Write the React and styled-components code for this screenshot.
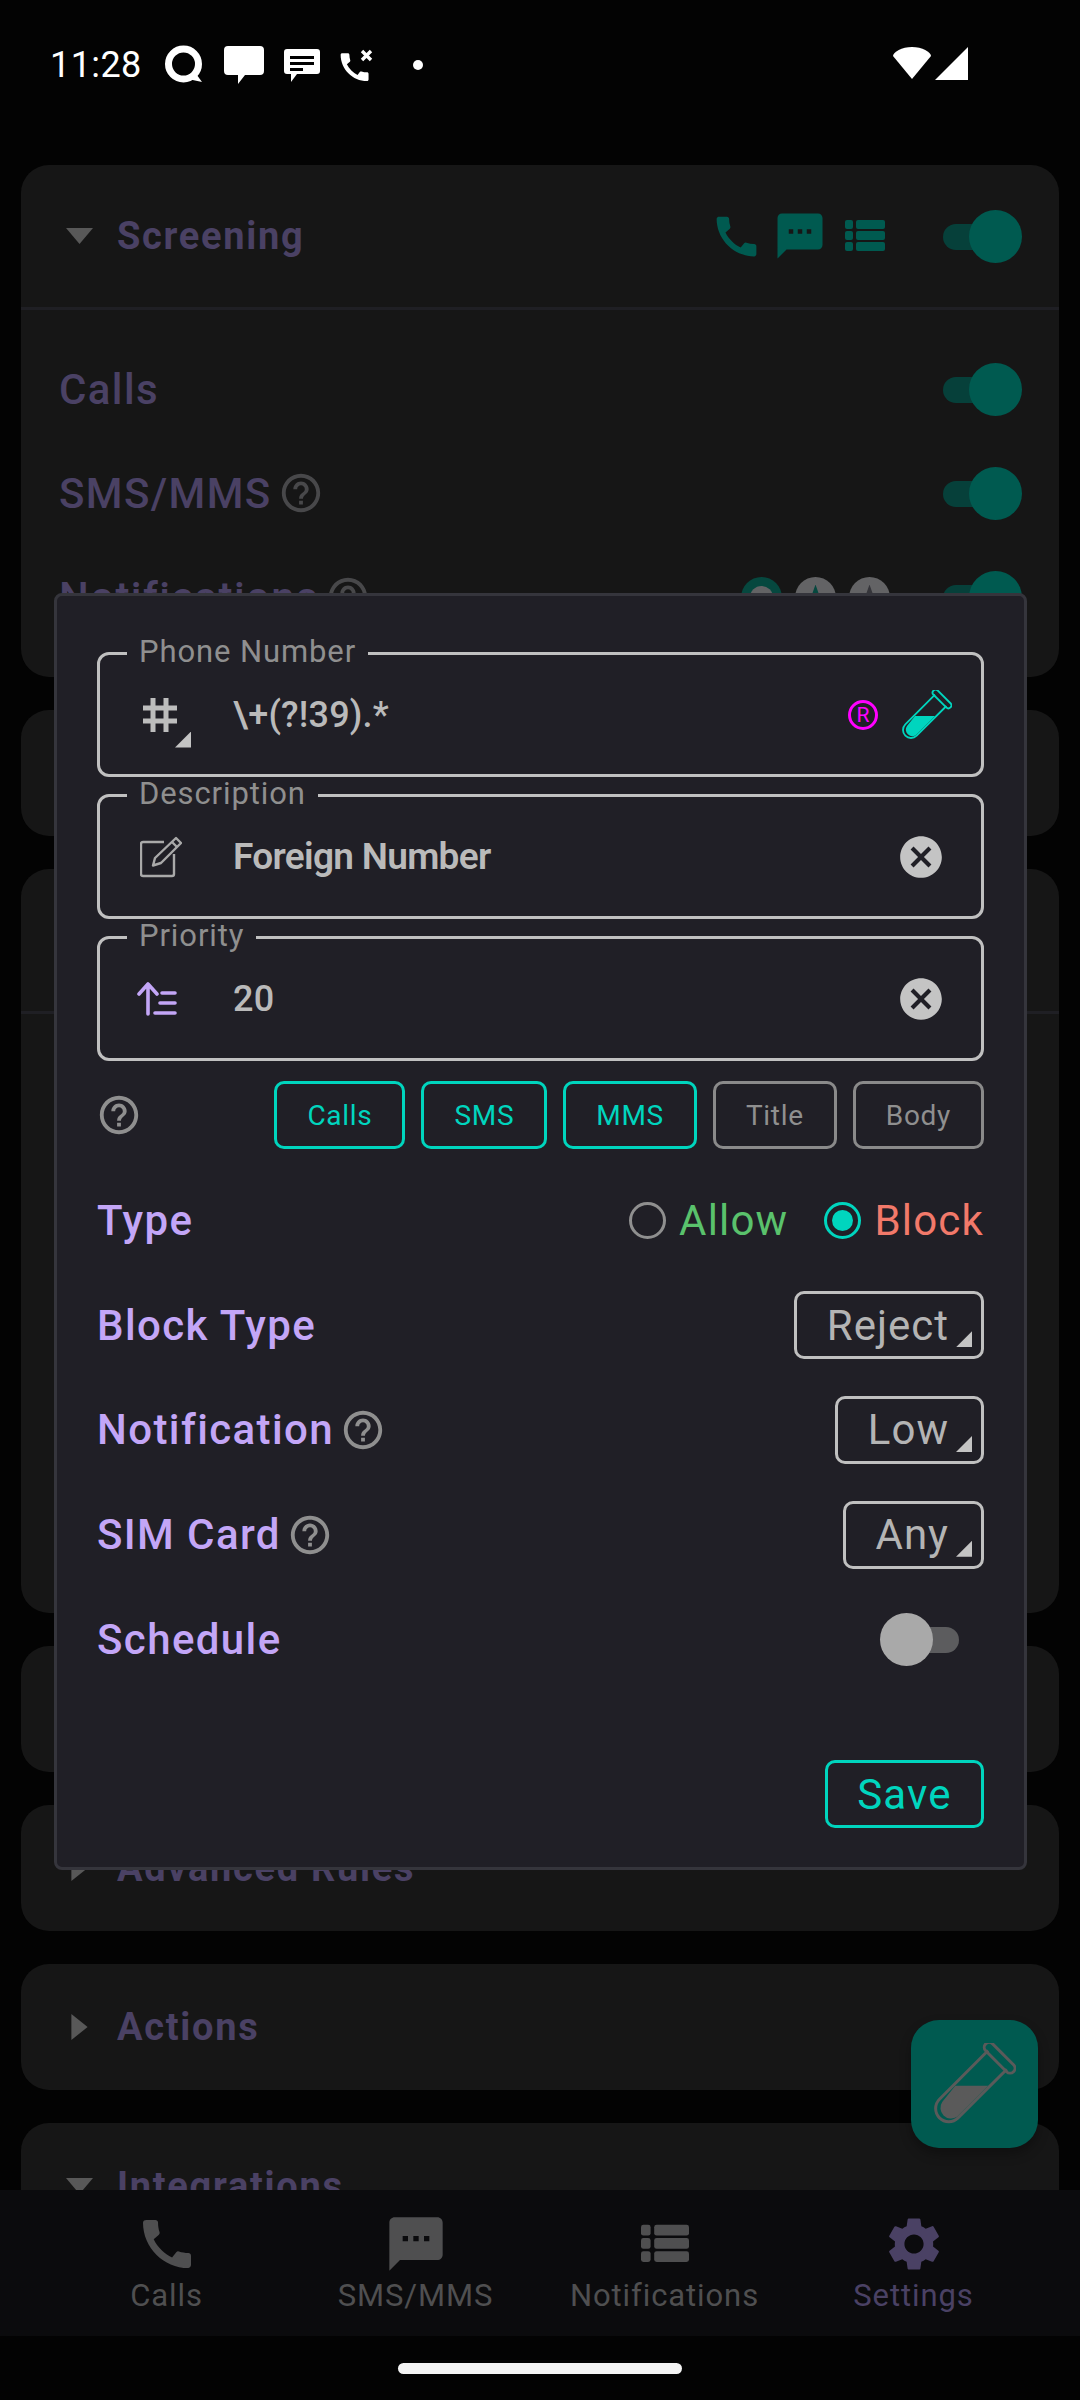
import React from 'react';
import styled, { createGlobalStyle } from 'styled-components';
import { MdCall, MdSms, MdSettings, MdCancel, MdHelpOutline } from 'react-icons/md';

const GlobalStyle = createGlobalStyle`
    html, body {
        margin: 0;
        padding: 0;
        background: #030303;
    }
    * {
        box-sizing: border-box;
    }
`

const TEAL = '#00d5be';
const DIM_TEAL = '#005a50';
const LILAC = '#c3a6f7';
const DIM_LILAC = '#4a4164';

const TubeIcon = ({ size, color }) => (
    <svg width={size} height={size} viewBox="0 0 50 50" fill="none">
        <path d="M33 4.6L3.34 34.34A8 8 0 0 0 14.66 45.66L44.4 16" stroke={color} strokeWidth="1.8" />
        <rect x="28" y="6" width="24" height="6" rx="3" transform="rotate(45 40 9)" stroke={color} strokeWidth="1.8" />
        <path d="M13 26H33L14 45A6.5 6.5 0 0 1 5 36Z" fill={color} />
    </svg>
)

const ListIcon = ({ size, color }) => (
    <svg width={size} height={size} viewBox="0 0 40 32" fill={color}>
        <rect x="0" y="0" width="8" height="9" rx="2" />
        <rect x="0" y="11" width="8" height="9" rx="2" />
        <rect x="0" y="22" width="8" height="9" rx="2" />
        <rect x="11" y="0" width="29" height="9" rx="2" />
        <rect x="11" y="11" width="29" height="9" rx="2" />
        <rect x="11" y="22" width="29" height="9" rx="2" />
    </svg>
)

const HashIcon = () => (
    <svg width="36" height="36" viewBox="0 0 36 36" stroke="#bdbdbd" strokeWidth="5" fill="none">
        <path d="M11 1V35M24 1V35M1 11H35M1 24H35" />
    </svg>
)

const EditIcon = () => (
    <svg width="42" height="42" viewBox="0 0 42 42" fill="none" stroke="#a9a9a9" strokeWidth="2.4" strokeLinejoin="round">
        <path d="M24 6H3a2 2 0 0 0-2 2V38a2 2 0 0 0 2 2H32a2 2 0 0 0 2-2V18" />
        <path d="M36 2L41 7L21 27L13 29.5L15 22Z" fill="#201f26" />
        <path d="M32 6L37 11" />
    </svg>
)

const PriorityIcon = () => (
    <svg width="40" height="34" viewBox="0 0 40 34" fill="none" stroke={LILAC} strokeWidth="3.6" strokeLinecap="round" strokeLinejoin="round">
        <path d="M11 32V2M2 12L11 2L20 12" />
        <path d="M25 11H38M23 21H38M18 31H38" />
    </svg>
)

const QIcon = () => (
    <svg width="40" height="40" viewBox="0 0 40 40" fill="none">
        <circle cx="19.5" cy="19" r="15" stroke="#fff" strokeWidth="7" />
        <path d="M30 26L38 37L24 34Z" fill="#fff" />
    </svg>
)

const BubbleIcon = () => (
    <svg width="40" height="38" viewBox="0 0 40 38" fill="#fff">
        <path d="M4 0H36a4 4 0 0 1 4 4V25a4 4 0 0 1-4 4H21L14 38V29H4a4 4 0 0 1-4-4V4a4 4 0 0 1 4-4Z" />
    </svg>
)

const MessageIcon = () => (
    <svg width="36" height="33" viewBox="0 0 36 33">
        <path d="M3 0H33a3 3 0 0 1 3 3V22a3 3 0 0 1-3 3H13L7 33V25H3a3 3 0 0 1-3-3V3a3 3 0 0 1 3-3Z" fill="#fff" />
        <path d="M6 7H30V10H6ZM6 13H30V16H6ZM6 19H19V22H6Z" fill="#000" />
    </svg>
)

const CallCrossIcon = () => (
    <svg width="33" height="33" viewBox="0 0 33 33" fill="none">
        <g transform="translate(-4 -0.5) scale(1.55)">
            <path d="M20.01 15.38c-1.23 0-2.42-.2-3.53-.56-.35-.12-.74-.03-1.01.24l-1.57 1.97c-2.83-1.35-5.48-3.9-6.89-6.83l1.95-1.66c.27-.28.35-.67.24-1.02-.37-1.11-.56-2.3-.56-3.53 0-.54-.45-.99-.99-.99H4.19C3.65 3 3 3.24 3 3.99 3 13.28 10.73 21 20.01 21c.71 0 .99-.63.99-1.18v-3.45c0-.54-.45-.99-.99-.99z" fill="#fff" />
        </g>
        <path d="M22 2L31 11M31 2L22 11" stroke="#fff" strokeWidth="3.4" />
    </svg>
)

const WifiIcon = () => (
    <svg width="40" height="32" viewBox="0 0 40 32" fill="#fff">
        <path d="M20 32L1 9C1 5 10 0 20 0S39 5 39 9Z" />
    </svg>
)

const SignalIcon = () => (
    <svg width="33" height="33" viewBox="0 0 33 33" fill="#fff">
        <path d="M33 0V33H0Z" />
    </svg>
)

const Switch = ({ on }) => (
    <SwitchBox>
        <SwitchTrack $on={on} />
        <SwitchThumb $on={on} />
    </SwitchBox>
)

const Select = ({ children }) => (
    <SelectBox>
        {children}
        <Corner $right={9} $bottom={9} />
    </SelectBox>
)

const Help = ({ dim, flush }) => (
    <HelpMark $dim={dim} $flush={flush}><MdHelpOutline size={46} /></HelpMark>
)

const Field = ({ label, icon, value, bold, children }) => (
    <FieldBox>
        <FieldLabel>{label}</FieldLabel>
        <FieldIcon>{icon}</FieldIcon>
        <FieldValue $bold={bold}>{value}</FieldValue>
        {children}
    </FieldBox>
)

const App = () => {
    return (
        <Screen>
            <GlobalStyle />
            <StatusBar>
                <Clock>11:28</Clock>
                <StatusIcons>
                    <QIcon />
                    <BubbleIcon />
                    <MessageIcon />
                    <CallCrossIcon />
                    <StatusDot />
                </StatusIcons>
                <NetworkIcons>
                    <WifiIcon />
                    <SignalIcon />
                </NetworkIcons>
            </StatusBar>

            <Scroller>
                <Card $height={512}>
                    <Header $expanded>
                        <Arrow $open />
                        <Title>Screening</Title>
                        <HeaderIcons>
                            <MdCall size={53} color={DIM_TEAL} />
                            <MdSms size={54} color={DIM_TEAL} />
                            <ListIcon size={40} color={DIM_TEAL} />
                        </HeaderIcons>
                        <Switch on />
                    </Header>
                    <CardBody>
                        <CardRow>
                            <RowLabel>Calls</RowLabel>
                            <Switch on />
                        </CardRow>
                        <CardRow>
                            <RowLabel>SMS/MMS</RowLabel>
                            <Help dim />
                            <Switch on />
                        </CardRow>
                        <CardRow>
                            <RowLabel>Notifications</RowLabel>
                            <Help dim />
                            <Dots>
                                <Dot $bg="#06483f"><DotCore /></Dot>
                                <Dot $bg="#636365"><DotPeak $bg="#06483f" /></Dot>
                                <Dot $bg="#636365"><DotPeak $bg="#35353a" /></Dot>
                            </Dots>
                            <Switch on />
                        </CardRow>
                    </CardBody>
                </Card>
                <Card $height={126} />
                <Card $height={744}>
                    <Header $expanded />
                </Card>
                <Card $height={126} />
                <Card $height={126}>
                    <Header>
                        <Arrow />
                        <Title>Advanced Rules</Title>
                    </Header>
                </Card>
                <Card $height={126}>
                    <Header>
                        <Arrow />
                        <Title>Actions</Title>
                    </Header>
                </Card>
                <Card $height={300}>
                    <Header>
                        <Arrow $open />
                        <Title>Integrations</Title>
                    </Header>
                </Card>
            </Scroller>

            <BottomNav>
                <NavItem>
                    <MdCall size={64} />
                    <NavLabel>Calls</NavLabel>
                </NavItem>
                <NavItem>
                    <MdSms size={64} />
                    <NavLabel>SMS/MMS</NavLabel>
                </NavItem>
                <NavItem>
                    <NavIconBox><ListIcon size={48} color="#4f4f50" /></NavIconBox>
                    <NavLabel>Notifications</NavLabel>
                </NavItem>
                <NavItem $active>
                    <MdSettings size={64} />
                    <NavLabel>Settings</NavLabel>
                </NavItem>
            </BottomNav>

            <GestureBar>
                <HomePill />
            </GestureBar>

            <Fab>
                <TubeIcon size={82} color="#5a5a5a" />
            </Fab>

            <Dialog>
                <Field
                    label="Phone Number"
                    icon={<HashBox><HashIcon /><Corner $right={1} $bottom={-15} /></HashBox>}
                    value="\+(?!39).*"
                >
                    <RegexMark>R</RegexMark>
                    <TubeSlot><TubeIcon size={50} color={TEAL} /></TubeSlot>
                </Field>
                <Field label="Description" icon={<EditIcon />} value="Foreign Number" bold>
                    <ClearMark><MdCancel size={50} /></ClearMark>
                </Field>
                <Field label="Priority" icon={<PriorityShift><PriorityIcon /></PriorityShift>} value="20">
                    <ClearMark><MdCancel size={50} /></ClearMark>
                </Field>

                <ChipRow>
                    <Help flush />
                    <Chips>
                        <Chip $active>Calls</Chip>
                        <Chip $active>SMS</Chip>
                        <Chip $active>MMS</Chip>
                        <Chip>Title</Chip>
                        <Chip>Body</Chip>
                    </Chips>
                </ChipRow>

                <OptionRow>
                    <OptionLabel>Type</OptionLabel>
                    <RadioGroup>
                        <Radio />
                        <RadioText $color="#5ac26c">Allow</RadioText>
                        <Radio $checked />
                        <RadioText $color="#f2796a">Block</RadioText>
                    </RadioGroup>
                </OptionRow>
                <OptionRow>
                    <OptionLabel>Block Type</OptionLabel>
                    <Select>Reject</Select>
                </OptionRow>
                <OptionRow>
                    <OptionLabel>Notification</OptionLabel>
                    <Help />
                    <Select>Low</Select>
                </OptionRow>
                <OptionRow>
                    <OptionLabel>SIM Card</OptionLabel>
                    <Help />
                    <Select>Any</Select>
                </OptionRow>
                <OptionRow>
                    <OptionLabel>Schedule</OptionLabel>
                    <ScheduleSwitch><Switch /></ScheduleSwitch>
                </OptionRow>

                <DialogFooter>
                    <SaveButton>Save</SaveButton>
                </DialogFooter>
            </Dialog>
        </Screen>
    )
}

export default App;


const Screen = styled.div`
    position: relative;
    display: flex;
    flex-direction: column;
    width: 1080px;
    height: 2400px;
    overflow: hidden;
    background: #030303;
    font-family: Roboto, 'Liberation Sans', sans-serif;
`

const StatusBar = styled.div`
    display: flex;
    align-items: flex-start;
    flex: 0 0 165px;
    padding: 46px 112px 0 50px;
    color: #fff;
`

const Clock = styled.span`
    font-size: 36px;
    line-height: 38px;
    letter-spacing: 0.4px;
`

const StatusIcons = styled.div`
    display: flex;
    align-items: center;
    gap: 20px;
    margin-left: 22px;
    height: 38px;
`

const StatusDot = styled.div`
    width: 10px;
    height: 10px;
    margin-left: 20px;
    border-radius: 50%;
    background: #fff;
`

const NetworkIcons = styled.div`
    display: flex;
    gap: 3px;
    margin-left: auto;
    margin-top: 1px;
`

const Scroller = styled.div`
    flex: 1;
    min-height: 0;
    overflow: hidden;
    display: flex;
    flex-direction: column;
    gap: 33px;
    padding: 0 21px;
`

const Card = styled.div`
    flex: 0 0 ${(p) => p.$height}px;
    border-radius: 28px;
    background: #161616;
`

const Header = styled.div`
    display: flex;
    align-items: center;
    height: ${(p) => (p.$expanded ? '145px' : '126px')};
    padding: 0 37px 0 45px;
    border-bottom: ${(p) => (p.$expanded ? '3px solid #1f1f24' : 'none')};
`

const Arrow = styled.div`
    width: 27px;
    height: ${(p) => (p.$open ? '16px' : '26px')};
    margin-right: 24px;
    background: #585858;
    clip-path: ${(p) => (p.$open
        ? 'polygon(0 0, 100% 0, 50% 100%)'
        : 'polygon(20% 0, 80% 50%, 20% 100%)')};
`

const Title = styled.span`
    font-size: 38px;
    font-weight: 700;
    letter-spacing: 1.7px;
    color: ${DIM_LILAC};
`

const HeaderIcons = styled.div`
    display: flex;
    align-items: center;
    gap: 10px;
    margin-left: auto;
    margin-right: 58px;
    svg:last-child {
        margin-left: 8px;
    }
`

const CardBody = styled.div`
    padding: 27px 37px 0 38px;
`

const CardRow = styled.div`
    display: flex;
    align-items: center;
    height: 104px;
`

const RowLabel = styled.span`
    font-size: 42px;
    font-weight: 500;
    letter-spacing: 1.4px;
    color: ${DIM_LILAC};
`

const Dots = styled.div`
    display: flex;
    gap: 13px;
    margin-left: auto;
    margin-right: 53px;
`

const Dot = styled.div`
    position: relative;
    width: 41px;
    height: 41px;
    border-radius: 50%;
    background: ${(p) => p.$bg};
`

const DotCore = styled.div`
    position: absolute;
    top: 9px;
    left: 9px;
    width: 23px;
    height: 23px;
    border-radius: 50%;
    background: #636365;
`

const DotPeak = styled.div`
    position: absolute;
    top: 8px;
    left: 12px;
    width: 17px;
    height: 24px;
    background: ${(p) => p.$bg};
    clip-path: polygon(50% 0, 100% 100%, 0 100%);
`

const SwitchBox = styled.div`
    position: relative;
    flex: 0 0 79px;
    height: 53px;
    margin-left: auto;
    ${Dots} + &, ${HeaderIcons} + & {
        margin-left: 0;
    }
`

const SwitchTrack = styled.div`
    position: absolute;
    top: 14px;
    left: ${(p) => (p.$on ? '0' : '12px')};
    right: ${(p) => (p.$on ? '12px' : '0')};
    height: 26px;
    border-radius: 13px;
    background: ${(p) => (p.$on ? '#06403a' : '#5c5c5e')};
`

const SwitchThumb = styled.div`
    position: absolute;
    top: 0;
    left: ${(p) => (p.$on ? '26px' : '0')};
    width: 53px;
    height: 53px;
    border-radius: 50%;
    background: ${(p) => (p.$on ? DIM_TEAL : '#a9a9a9')};
`

const HelpMark = styled.span`
    display: inline-flex;
    margin-left: ${(p) => (p.$flush ? '-1px' : '6px')};
    color: ${(p) => (p.$dim ? '#48484a' : '#8f8f8f')};
`

const BottomNav = styled.div`
    display: grid;
    grid-template-columns: repeat(4, 1fr);
    flex: 0 0 146px;
    padding: 0 42px;
    background: #0b0b0d;
`

const NavItem = styled.div`
    display: flex;
    flex-direction: column;
    align-items: center;
    justify-content: flex-end;
    padding-bottom: 24px;
    color: ${(p) => (p.$active ? DIM_LILAC : '#4f4f50')};
`

const NavIconBox = styled.div`
    display: flex;
    align-items: center;
    justify-content: center;
    height: 64px;
`

const NavLabel = styled.span`
    margin-top: 3px;
    font-size: 31px;
    line-height: 33px;
    letter-spacing: 0.9px;
`

const GestureBar = styled.div`
    display: flex;
    justify-content: center;
    flex: 0 0 64px;
    padding-top: 27px;
`

const HomePill = styled.div`
    width: 284px;
    height: 11px;
    border-radius: 6px;
    background: #f4f4f4;
`

const Fab = styled.div`
    position: absolute;
    left: 911px;
    top: 2020px;
    display: flex;
    align-items: center;
    justify-content: center;
    width: 127px;
    height: 128px;
    border-radius: 28px;
    background: ${DIM_TEAL};
    box-shadow: 0 6px 12px rgba(0, 0, 0, 0.3);
`

const Dialog = styled.div`
    position: absolute;
    left: 54px;
    top: 593px;
    display: flex;
    flex-direction: column;
    width: 973px;
    height: 1277px;
    padding: 56px 40px 39px;
    border: 3px solid #35353c;
    border-radius: 8px;
    background: #201f26;
`

const FieldBox = styled.div`
    position: relative;
    display: flex;
    align-items: center;
    flex: 0 0 125px;
    margin-bottom: 17px;
    padding: 0 0 0 40px;
    border: 3px solid #c0c0c0;
    border-radius: 12px;
`

const FieldLabel = styled.span`
    position: absolute;
    left: 27px;
    top: -21px;
    padding: 0 12px;
    font-size: 31px;
    line-height: 36px;
    letter-spacing: 0.9px;
    color: #8f8f8f;
    background: linear-gradient(transparent 14px, #201f26 14px, #201f26 27px, transparent 27px);
`

const FieldIcon = styled.div`
    display: flex;
    align-items: center;
    flex: 0 0 93px;
`

const HashBox = styled.div`
    position: relative;
    width: 52px;
    height: 36px;
    padding-left: 2px;
`

const PriorityShift = styled.div`
    display: flex;
    margin-left: -3px;
`

const FieldValue = styled.span`
    flex: 1;
    font-size: ${(p) => (p.$bold ? '37px' : '36px')};
    font-weight: ${(p) => (p.$bold ? 600 : 500)};
    letter-spacing: ${(p) => (p.$bold ? '-0.7px' : '0.2px')};
    color: #bababa;
`

const Corner = styled.div`
    position: absolute;
    right: ${(p) => p.$right}px;
    bottom: ${(p) => p.$bottom}px;
    width: 16px;
    height: 16px;
    background: #c4c4c4;
    clip-path: polygon(100% 0, 100% 100%, 0 100%);
`

const RegexMark = styled.span`
    display: flex;
    align-items: center;
    justify-content: center;
    width: 30px;
    height: 30px;
    margin-right: 24px;
    border: 3px solid #f0f;
    border-radius: 50%;
    font-size: 21px;
    color: #f0f;
`

const TubeSlot = styled.div`
    display: flex;
    margin-right: 29px;
`

const ClearMark = styled.span`
    display: flex;
    margin-right: 35px;
    color: #c4c4c4;
`

const ChipRow = styled.div`
    display: flex;
    align-items: center;
    flex: 0 0 68px;
    margin-top: 3px;
    margin-bottom: 19px;
`

const Chips = styled.div`
    display: flex;
    gap: 16px;
    margin-left: auto;
`

const Chip = styled.div`
    display: flex;
    align-items: center;
    height: 68px;
    padding: 0 30px;
    border: 3px solid ${(p) => (p.$active ? TEAL : '#8a8a8a')};
    border-radius: 10px;
    font-size: 28px;
    letter-spacing: 0.7px;
    color: ${(p) => (p.$active ? TEAL : '#8f8f8f')};
`

const OptionRow = styled.div`
    display: flex;
    align-items: center;
    flex: 0 0 104.8px;
`

const OptionLabel = styled.span`
    font-size: 42px;
    font-weight: 500;
    letter-spacing: 1.4px;
    color: ${LILAC};
`

const RadioGroup = styled.div`
    display: flex;
    align-items: center;
    margin-left: auto;
`

const Radio = styled.div`
    display: flex;
    align-items: center;
    justify-content: center;
    width: 37px;
    height: 37px;
    margin-right: 13px;
    border: 3px solid ${(p) => (p.$checked ? TEAL : '#8f8f8f')};
    border-radius: 50%;
    &::after {
        content: '';
        display: ${(p) => (p.$checked ? 'block' : 'none')};
        width: 21px;
        height: 21px;
        border-radius: 50%;
        background: ${TEAL};
    }
`

const RadioText = styled.span`
    font-size: 42px;
    letter-spacing: 1.2px;
    color: ${(p) => p.$color};
    &:nth-child(2) {
        margin-right: 36px;
    }
`

const SelectBox = styled.div`
    position: relative;
    display: flex;
    align-items: center;
    height: 68px;
    margin-left: auto;
    padding: 0 32px 0 30px;
    border: 3px solid #c0c0c0;
    border-radius: 10px;
    font-size: 42px;
    letter-spacing: 1px;
    color: #b4b4b4;
`

const ScheduleSwitch = styled.div`
    display: flex;
    margin-left: auto;
    margin-right: 25px;
`

const DialogFooter = styled.div`
    display: flex;
    justify-content: flex-end;
    margin-top: auto;
`

const SaveButton = styled.div`
    display: flex;
    align-items: center;
    justify-content: center;
    width: 159px;
    height: 68px;
    border: 3px solid ${TEAL};
    border-radius: 10px;
    font-size: 42px;
    letter-spacing: 1.2px;
    color: ${TEAL};
`
